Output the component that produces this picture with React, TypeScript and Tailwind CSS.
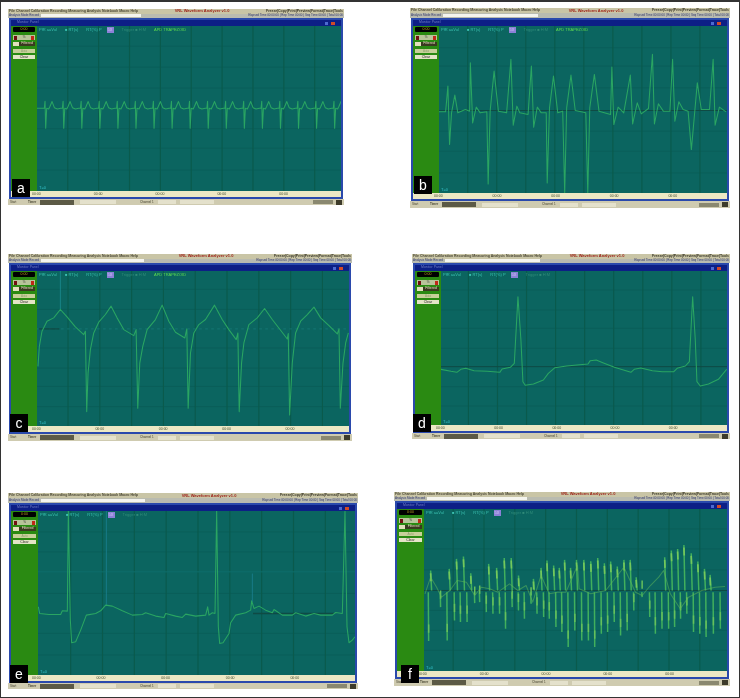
import React from "react";

const beatA = (() => {
  const pts: string[] = ["113,322", "125,322"];
  for (let k = 0; k < 17; k++) {
    const x = 138 + 54 * k;
    if (x > 1022) break;
    pts.push(`${x - 3},322`, `${x - 1},301`, `${x + 1},381`, `${x + 4},322`, `${x + 10},324`, `${x + 14},316`, `${x + 20},302`, `${x + 27},320`, `${x + 36},324`, `${x + 46},322`);
  }
  return pts.join(" ");
})();

const waveB = "205,332 225,332 232,255 237,430 243,335 253,282 262,335 285,325 298,330 300,185 307,365 318,318 330,335 350,332 354,548 360,330 372,210 385,330 410,335 423,175 430,372 441,315 450,335 475,340 485,195 492,378 503,318 515,335 530,335 533,545 540,320 552,225 565,335 580,330 586,575 592,320 605,222 618,328 650,335 656,575 662,320 676,220 690,330 725,340 729,198 735,370 748,318 765,335 785,222 792,368 806,305 818,338 840,322 852,160 858,368 870,308 885,330 905,330 913,175 920,360 932,302 945,325 960,330 970,445 988,245 1000,325 1025,325 1036,175 1042,372 1055,318 1075,332";
const waveC = "118,380 122,320 130,275 145,245 165,235 185,210 205,232 230,262 255,285 260,275 264,515 268,400 275,330 285,280 300,248 320,225 337,200 355,235 375,270 405,288 412,270 417,505 423,370 432,320 445,270 470,240 490,197 510,245 530,278 558,295 564,268 568,505 575,340 585,280 600,255 620,240 647,197 670,240 690,270 712,300 717,280 721,515 728,370 735,310 750,255 775,235 797,207 820,240 845,272 865,298 868,282 872,525 880,370 890,280 905,245 925,225 945,203 965,235 990,258 1015,283 1020,268 1024,505 1032,370 1040,310 1048,280";
const waveD = "210,388 240,394 258,397 270,388 285,385 310,392 350,394 388,397 395,387 420,382 432,370 443,170 452,300 458,425 465,436 490,432 520,420 535,400 555,383 590,378 630,374 655,372 662,362 680,360 700,368 735,382 770,392 785,397 795,388 815,384 850,392 880,395 915,395 925,385 950,378 962,365 972,170 980,300 985,425 995,438 1020,432 1050,418 1075,388";
const waveE = "118,380 122,400 150,403 185,403 190,392 205,393 208,92 214,420 218,488 230,485 245,450 262,405 290,400 305,392 320,375 340,378 370,392 400,405 430,403 440,398 470,408 495,412 500,400 530,408 550,412 560,402 590,408 620,405 626,380 630,405 640,398 648,400 653,92 658,440 662,490 672,488 690,460 695,428 710,405 740,398 755,390 758,362 765,385 780,378 800,390 820,398 825,388 850,405 880,405 890,398 920,408 945,400 965,405 1000,405 1010,397 1030,400 1038,92 1044,440 1050,488 1060,480 1068,470";

const fTops: [number, number][] = [[182, 270], [238, 265], [260, 235], [281, 228], [303, 278], [357, 250], [381, 262], [404, 232], [425, 232], [447, 285], [492, 295], [515, 262], [533, 240], [553, 255], [570, 262], [586, 238], [604, 262], [622, 238], [644, 238], [665, 242], [686, 232], [706, 248], [725, 243], [745, 258], [765, 238], [784, 238], [802, 290], [888, 230], [908, 210], [927, 205], [946, 193], [968, 218], [988, 243], [1008, 265], [1025, 283]];
const fBottoms: [number, number][] = [[176, 482], [212, 380], [232, 480], [254, 420], [272, 425], [292, 425], [315, 368], [330, 365], [350, 395], [370, 400], [390, 400], [408, 445], [428, 380], [447, 390], [465, 415], [485, 370], [503, 400], [523, 410], [540, 415], [560, 440], [578, 455], [597, 500], [617, 450], [638, 480], [658, 480], [677, 500], [697, 460], [716, 455], [736, 425], [755, 465], [775, 450], [795, 390], [820, 350], [843, 410], [860, 460], [880, 445], [900, 445], [918, 440], [936, 415], [955, 400], [975, 455], [994, 460], [1013, 470], [1035, 460], [1056, 445]];
const wanderF = "165,340 182,290 200,320 215,350 240,330 262,300 290,305 315,345 335,320 360,325 385,335 420,310 445,330 470,315 490,365 515,285 540,340 565,335 590,335 625,255 630,325 665,340 710,330 765,260 800,335 820,345 845,315 870,290 885,270 905,340 935,385 960,350 1000,330 1040,320 1070,318";

type PanelDef = {
  box: string;
  labelBox: string;
  label: string;
  topStrip: string;
  bottomStrip: string;
  sidebar: string;
  viewBox: string;
  vLines: number[];
  hLines: number[];
  wave: string;
  extra?: React.ReactNode;
  lime?: boolean;
  startWidth: string;
  waveColor?: string;
  waveClass?: string;
};

const xs = (s: number, d: number) => Array.from({ length: 9 }, (_, i) => s + d * i);

function Strip() {
  return (
    <div className="flex h-full flex-col overflow-hidden">
      <div className="flex flex-1 items-center justify-between bg-[#c9c5a6] px-[1px] text-[3.5px] font-bold leading-none text-[#4a4734]">
        <span className="whitespace-nowrap">File  Channel  Calibration  Recording  Measuring  Analysis  Notebook  Macro  Help</span>
        <span className="whitespace-nowrap text-[4px] text-[#9c1c12]">VRL Waveform Analyzer v1.0</span>
        <span className="whitespace-nowrap text-[#3a3828]">Freeze|Copy|Print|Preview|Format|Trace|Tools</span>
      </div>
      <div className="flex flex-1 items-center bg-[#b9bbb0] px-[1px] text-[3px] leading-none text-[#33386a]">
        <span className="whitespace-nowrap">Analysis Mode Record</span>
        <span className="mx-[2px] h-[3px] w-[30%] bg-[#f4f4ee]" />
        <span className="ml-auto whitespace-nowrap">Elapsed Time 00:00:00 | Rep Time 00:00 | Seq Time 00:00 | Total 00:00</span>
      </div>
    </div>
  );
}

function BottomStrip({ startWidth }: { startWidth: string }) {
  return (
    <div className="flex h-full items-center overflow-hidden bg-[#cfcbb0] px-[2px] text-[3px] leading-none text-[#45432f]">
      <span className={`shrink-0 whitespace-nowrap ${startWidth}`}>Start</span>
      <span className="w-[12px] shrink-0 whitespace-nowrap font-bold">Timer</span>
      <span className="h-[5px] w-[34px] shrink-0 bg-[#5c5a46]" />
      <span className="ml-[6px] h-[4px] w-[36px] shrink-0 bg-[#e4e1cc]" />
      <span className="ml-[24px] whitespace-nowrap">Channel 1</span>
      <span className="ml-[4px] h-[4px] w-[18px] bg-[#e4e1cc]" />
      <span className="ml-[4px] h-[4px] w-[34px] bg-[#e4e1cc]" />
      <span className="ml-auto h-[4px] w-[20px] bg-[#8a8870]" />
      <span className="ml-[3px] h-[5px] w-[6px] bg-[#3d3b2a]" />
    </div>
  );
}

function Sidebar({ width }: { width: string }) {
  return (
    <div className={`flex shrink-0 flex-col gap-[2px] bg-[#2a8a12] px-[2px] pt-[1px] ${width}`}>
      <div className="h-[5px] rounded-[1px] bg-black text-center text-[3.5px] leading-[5px] text-[#b8a020]">0:00</div>
      <div className="mt-[1px] flex h-[5px] items-center justify-between bg-[#b8c49a] px-[1px]">
        <span className="h-[4px] w-[3px] bg-[#701010]" />
        <span className="text-[3px] leading-none text-[#333]">%</span>
        <span className="h-[4px] w-[3px] bg-[#c02818]" />
      </div>
      <div className="flex h-[4px] items-center bg-[#e2e0bc] text-[3.5px] leading-none text-[#222]">
        <span className="ml-[6px] flex-1 bg-[#3a3a20] text-center text-[#e2e0bc]">Filtered</span>
      </div>
      <div className="mt-[1px] h-[4px] bg-[#c8d09a] text-center text-[3px] leading-[4px] text-[#90a070]">Auto</div>
      <div className="h-[4px] bg-[#e4e4c6] text-center text-[3.5px] leading-[4px] text-[#222]">Clear</div>
    </div>
  );
}

function Panel({ def }: { def: PanelDef }) {
  const [vx, vy, vw, vh] = def.viewBox.split(" ").map(Number);
  return (
    <div className={`relative flex shrink-0 flex-col font-['Liberation_Sans',sans-serif] ${def.box}`}>
      <div className={`blur-[0.7px] ${def.topStrip}`}><Strip /></div>
      <div className="mx-[1px] flex min-h-0 flex-1 flex-col border-[2px] border-[#2a49ac] bg-[#2a49ac] blur-[0.7px]">
        <div className="flex h-[6px] shrink-0 items-center justify-between bg-[#0d1f86] px-[6px] text-[3.5px] leading-none text-[#6d7ac0]">
          <span>Monitor Panel</span>
          <span className="flex gap-[3px]">
            <span className="h-[3px] w-[3px] bg-[#4d6ad0]" />
            <span className="h-[3px] w-[4px] bg-[#d04a28]" />
          </span>
        </div>
        <div className="flex min-h-0 flex-1">
          <Sidebar width={def.sidebar} />
          <div className="relative min-w-0 flex-1 bg-[#0b6560]">
            <svg viewBox={def.viewBox} preserveAspectRatio="none" className="absolute inset-0 h-full w-full">
              {def.hLines.map((y) => (
                <line key={y} x1={vx} x2={vx + vw} y1={y} y2={y} stroke="#0a5d58" strokeWidth="2.5" />
              ))}
              {def.vLines.map((x) => (
                <line key={x} x1={x} x2={x} y1={vy} y2={vy + vh} stroke="#0a5a4c" strokeWidth="3.5" />
              ))}
              {def.extra}
              <polyline points={def.wave} fill="none" className={def.waveClass} stroke={def.waveColor ?? "#2aa562"} strokeWidth="3.2" strokeLinejoin="round" />
            </svg>
            <div className="absolute left-[2px] right-0 top-[1px] flex items-center gap-[8px] whitespace-nowrap text-[4px] leading-[6px] text-[#3ac0b0]">
              <span>PfR  aaVul</span>
              <span>■ RT(s)</span>
              <span>RT(%) P</span>
              <span className="-ml-[3px] bg-[#8c80d8] px-[1px] text-[#cfc8f4]">5X</span>
              <span className="text-[#2f8a78]">Trigger ■ H:M</span>
              {def.lime && <span className="text-[#5fdc50]">APD TRAPEZOID</span>}
            </div>
            <span className="absolute bottom-[1px] left-[2px] text-[4px] leading-none text-[#35c0c8]">T=0</span>
          </div>
        </div>
        <div className="grid h-[6px] shrink-0 grid-cols-5 bg-[#ece8c4] pl-[21px] text-[3.5px] leading-[6px] text-[#3f4a30]">
          <span>00:00</span>
          <span>00:00</span>
          <span>00:00</span>
          <span>00:00</span>
          <span>00:00</span>
        </div>
      </div>
      <div className={`blur-[0.7px] ${def.bottomStrip}`}><BottomStrip startWidth={def.startWidth} /></div>
      <div className={`absolute flex h-[18px] w-[18px] items-center justify-center bg-black pb-[1px] text-[14px] leading-none text-white blur-[0.25px] ${def.labelBox}`}>
        {def.label}
      </div>
    </div>
  );
}

const a: PanelDef = {
  box: "ml-[7px] mt-[7px] h-[196px] w-[336px]",
  labelBox: "left-[4px] bottom-[8px]",
  label: "a",
  topStrip: "h-[9px]",
  bottomStrip: "h-[6px]",
  sidebar: "w-[26px]",
  viewBox: "113 78 909 489",
  vLines: xs(205, 92.3),
  hLines: [138, 200, 262, 382, 440, 505],
  wave: beatA,
  lime: true,
  startWidth: "w-[18px]",
};
const b: PanelDef = {
  box: "ml-[66px] mt-[6px] h-[200px] w-[320px]",
  labelBox: "left-[4px] bottom-[14px]",
  label: "b",
  topStrip: "h-[10px]",
  bottomStrip: "h-[7px]",
  sidebar: "w-[26px]",
  viewBox: "205 75 873 500",
  vLines: xs(292, 88),
  hLines: [140, 195, 260, 390, 450, 515],
  wave: waveB,
  extra: <line x1="205" x2="1078" y1="328" y2="328" stroke="#0f4a44" strokeWidth="3" />,
  lime: true,
  startWidth: "w-[18px]",
};
const c: PanelDef = {
  box: "ml-[7px] h-[187px] w-[344px]",
  labelBox: "left-[2px] bottom-[9px]",
  label: "c",
  topStrip: "h-[9px]",
  bottomStrip: "h-[7px]",
  sidebar: "w-[26px]",
  viewBox: "115 95 935 463",
  vLines: xs(208, 95.3),
  hLines: [150, 210, 325, 385, 440, 500],
  wave: waveC,
  extra: (
    <g>
      <line x1="115" x2="1050" y1="268" y2="268" stroke="#1a7f7c" strokeWidth="2" strokeDasharray="8 10" />
      <line x1="120" x2="182" y1="268" y2="268" stroke="#0f4a44" strokeWidth="4" />
      <line x1="185" x2="185" y1="95" y2="210" stroke="#1b8a90" strokeWidth="2.5" />
    </g>
  ),
  lime: true,
  startWidth: "w-[18px]",
};
const d: PanelDef = {
  box: "ml-[60px] h-[185px] w-[318px]",
  labelBox: "left-[1px] bottom-[7px]",
  label: "d",
  topStrip: "h-[9px]",
  bottomStrip: "h-[6px]",
  sidebar: "w-[26px]",
  viewBox: "210 93 866 462",
  vLines: xs(293, 88),
  hLines: [150, 210, 265, 325, 440, 498],
  wave: waveD,
  extra: <line x1="210" x2="1076" y1="380" y2="380" stroke="#0f4a44" strokeWidth="3" />,
  startWidth: "w-[18px]",
};
const e: PanelDef = {
  box: "ml-[7px] mt-[1px] h-[196px] w-[350px]",
  labelBox: "left-[2px] bottom-[6px]",
  label: "e",
  topStrip: "h-[10px]",
  bottomStrip: "h-[6px]",
  sidebar: "w-[27px]",
  viewBox: "117 92 951 493",
  vLines: xs(215, 95.5),
  hLines: [155, 215, 275, 340, 460, 525],
  wave: waveE,
  extra: (
    <g>
      <line x1="322" x2="322" y1="92" y2="375" stroke="#1b7f90" strokeWidth="2.5" />
      <line x1="760" x2="760" y1="280" y2="365" stroke="#1b7f90" strokeWidth="2.5" />
      <line x1="115" x2="1068" y1="275" y2="275" stroke="#127a78" strokeWidth="2" />
      <line x1="762" x2="1005" y1="400" y2="400" stroke="#0f4a44" strokeWidth="5" />
    </g>
  ),
  startWidth: "w-[18px]",
};
const f: PanelDef = {
  box: "ml-[36px] h-[194px] w-[336px]",
  labelBox: "left-[7px] bottom-[3px]",
  label: "f",
  topStrip: "h-[9px]",
  bottomStrip: "h-[7px]",
  sidebar: "w-[27px]",
  viewBox: "162 85 914 487",
  vLines: xs(250, 93),
  hLines: [145, 205, 268, 390, 450, 510],
  wave: wanderF,
  waveColor: "#62bc5a",
  waveClass: "opacity-50",
  extra: (
    <g>
      <line x1="162" x2="1076" y1="330" y2="330" stroke="#0f4a44" strokeWidth="3" />
      {fTops.map(([x, y]) => (
        <g key={`t${x}`}>
          <line x1={x} x2={x + 3} y1={y} y2={330} stroke="#41b05c" strokeWidth="4.5" />
          <line x1={x} x2={x + 1} y1={y + 8} y2={y + 32} stroke="#74c85c" strokeWidth="5" />
        </g>
      ))}
      {fBottoms.map(([x, y]) => (
        <g key={`b${x}`}>
          <line x1={x} x2={x - 1} y1={y} y2={335} stroke="#41b05c" strokeWidth="4.5" />
          <line x1={x} x2={x} y1={y - 50} y2={y - 25} stroke="#66c05c" strokeWidth="4.5" />
        </g>
      ))}
    </g>
  ),
  startWidth: "w-[6px] mr-[18px]",
};

export default function App() {
  return (
    <div className="flex h-[698px] w-[740px] flex-col overflow-hidden border border-t-2 border-[#333333] bg-white">
      <div className="flex h-[252px] shrink-0 items-start">
        <Panel def={a} />
        <Panel def={b} />
      </div>
      <div className="flex h-[238px] shrink-0 items-start">
        <Panel def={c} />
        <Panel def={d} />
      </div>
      <div className="flex flex-1 items-start">
        <Panel def={e} />
        <Panel def={f} />
      </div>
    </div>
  );
}
